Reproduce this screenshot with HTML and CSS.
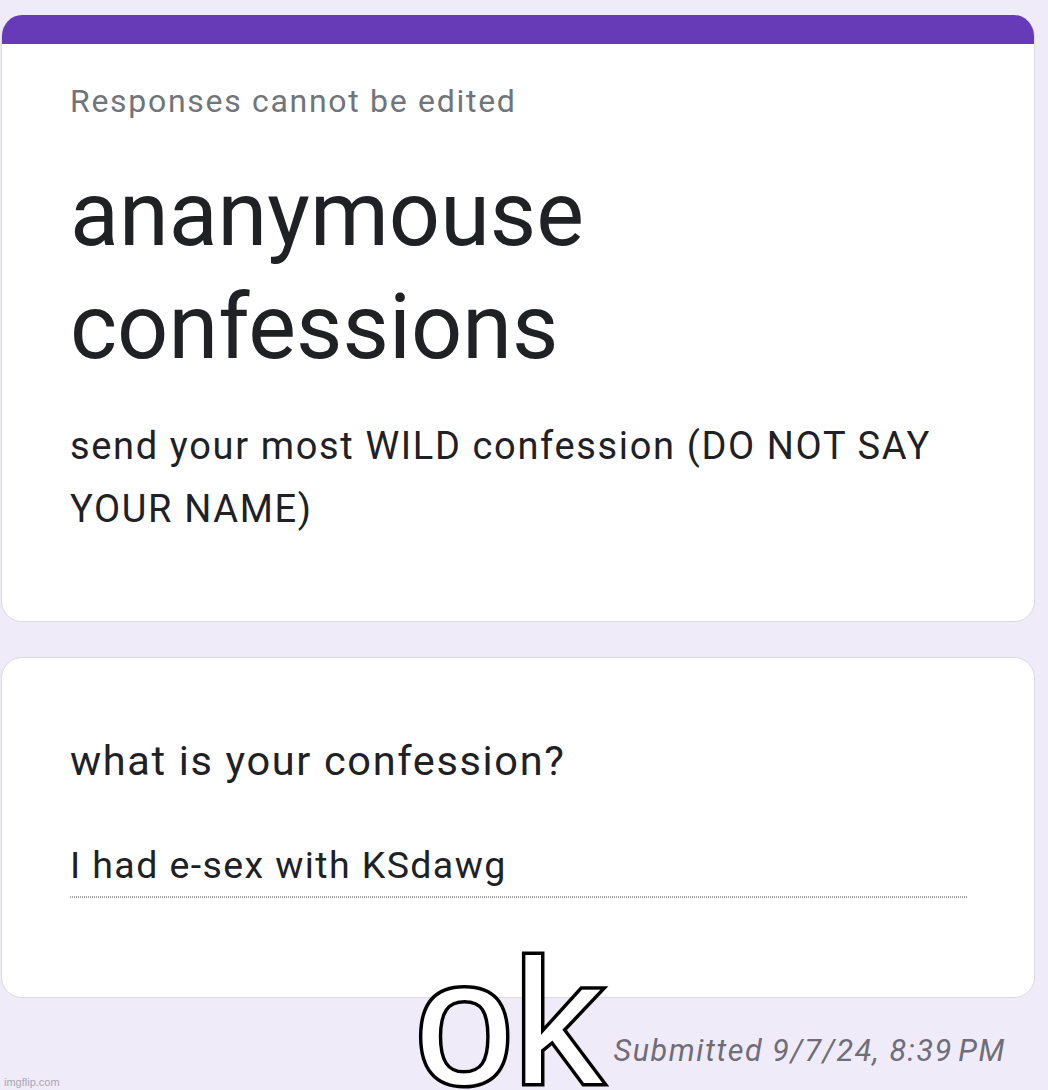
FILE: index.html
```html
<!DOCTYPE html>
<html lang="en">
<head>
<meta charset="utf-8">
<title>ananymouse confessions</title>
<link rel="stylesheet" href="styles.css">
</head>
<body>
<div class="page">
  <section class="card header-card">
    <div class="accent"></div>
    <div class="card-body header-body">
      <p class="note">Responses cannot be edited</p>
      <h1 class="title">ananymouse<br>confessions</h1>
      <p class="desc">send your most WILD confession (DO NOT SAY YOUR NAME)</p>
    </div>
  </section>
  <section class="card question-card">
    <div class="card-body question-body">
      <h2 class="question">what is your confession?</h2>
      <div class="answer">I had e-sex with KSdawg</div>
    </div>
  </section>
  <div class="footer">
    <span class="submitted">Submitted 9/7/24, 8:39&#8239;PM</span>
  </div>
  <div class="caption">ok</div>
  <div class="watermark">imgflip.com</div>
</div>
</body>
</html>
```

FILE: styles.css
```css
html, body {
  margin: 0;
  padding: 0;
}
body {
  background: #efebf8;
  font-family: Roboto, "Noto Sans", sans-serif;
  color: #202124;
  width: 1048px;
  height: 1090px;
  overflow: hidden;
}
.page {
  position: relative;
  height: 1090px;
  padding: 15px 13px 0 1px;
  box-sizing: border-box;
  display: flex;
  flex-direction: column;
}
.card {
  background: #fff;
  border: 1px solid #dadce0;
  border-radius: 21px;
  overflow: hidden;
}
.header-card {
  border-top: none;
  height: 607px;
  box-sizing: border-box;
}
.accent {
  height: 29px;
  background: #673ab7;
}
.card-body {
  padding: 0 68px;
}
.header-body {
  padding-top: 37px;
}
.note {
  margin: 0;
  font-size: 32px;
  line-height: 40px;
  letter-spacing: 1.7px;
  color: #70757a;
}
.title {
  margin: 37px 0 0;
  font-size: 90px;
  font-weight: 400;
  line-height: 113px;
}
.desc {
  margin: 31px 0 0;
  font-size: 38px;
  line-height: 63px;
  letter-spacing: 1.65px;
  max-width: 880px;
}
.question-card {
  margin-top: 35px;
  height: 341px;
  box-sizing: border-box;
}
.question-body {
  padding-top: 78px;
}
.question {
  margin: 0;
  font-size: 41.5px;
  font-weight: 400;
  line-height: 50px;
  letter-spacing: 1.65px;
}
.answer {
  margin-top: 55px;
  font-size: 37.5px;
  line-height: 48px;
  letter-spacing: 1.4px;
  width: 897px;
}
.answer::after {
  content: "";
  display: block;
  margin-top: 7px;
  height: 2px;
  background: repeating-linear-gradient(to right, #a3a3a8 0 1px, transparent 1px 2px);
}
.footer {
  display: flex;
  justify-content: flex-end;
  padding-right: 29px;
  margin-top: 33px;
}
.submitted {
  font-style: italic;
  font-size: 30.5px;
  line-height: 40px;
  letter-spacing: 1.6px;
  color: #6f6d78;
}
.caption {
  position: absolute;
  left: 415px;
  top: 955px;
  font-family: "Liberation Sans", Arial, sans-serif;
  font-size: 177px;
  line-height: 134px;
  color: #fff;
  -webkit-text-stroke: 7px #000;
  paint-order: stroke fill;
  text-shadow: 0 0 3px #000;
}
.watermark {
  position: absolute;
  left: 4px;
  bottom: 2px;
  font-family: "Liberation Sans", Arial, sans-serif;
  font-size: 11px;
  color: #a8a6b4;
}
```
